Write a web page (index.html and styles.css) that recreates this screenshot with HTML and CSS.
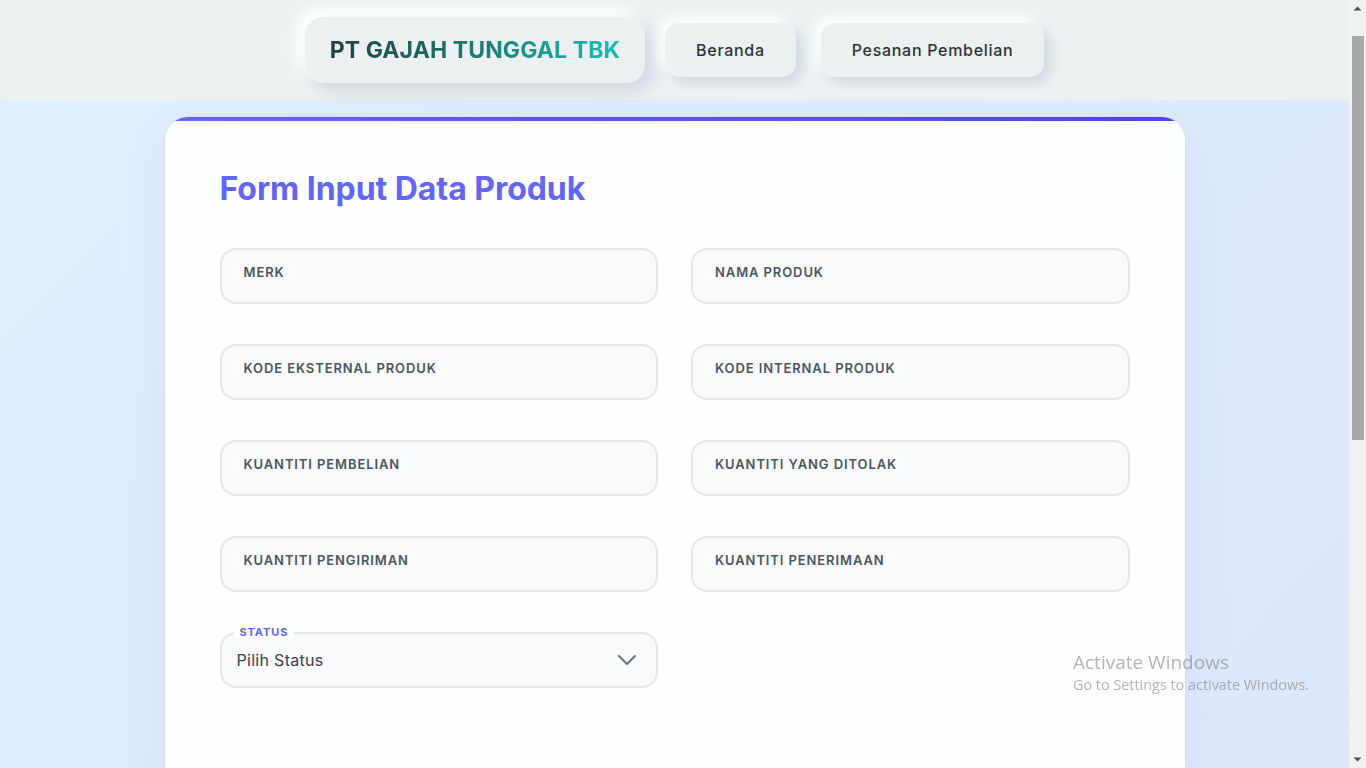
FILE: index.html
```html
<!DOCTYPE html>
<html lang="id">
<head>
<meta charset="utf-8">
<title>Form Input Data Produk</title>
<link rel="stylesheet" href="styles.css">
</head>
<body>
<header class="topbar">
  <div class="brand"><span class="brand-text">PT GAJAH TUNGGAL TBK</span></div>
  <nav class="nav">
    <a class="nav-btn" href="#">Beranda</a>
    <a class="nav-btn" href="#">Pesanan Pembelian</a>
  </nav>
</header>

<main class="card">
  <h1 class="title">Form Input Data Produk</h1>
  <form class="grid">
    <div class="field"><span class="label">MERK</span></div>
    <div class="field"><span class="label">NAMA PRODUK</span></div>
    <div class="field"><span class="label">KODE EKSTERNAL PRODUK</span></div>
    <div class="field"><span class="label">KODE INTERNAL PRODUK</span></div>
    <div class="field"><span class="label">KUANTITI PEMBELIAN</span></div>
    <div class="field"><span class="label">KUANTITI YANG DITOLAK</span></div>
    <div class="field"><span class="label">KUANTITI PENGIRIMAN</span></div>
    <div class="field"><span class="label">KUANTITI PENERIMAAN</span></div>
    <div class="field select">
      <span class="float-label">STATUS</span>
      <span class="select-text">Pilih Status</span>
      <svg class="chev" width="18" height="10" viewBox="0 0 18 10"><path d="M1 1l8 8 8-8" fill="none" stroke="#6b7280" stroke-width="2" stroke-linecap="round" stroke-linejoin="round"/></svg>
    </div>
  </form>
</main>

<div class="watermark">
  <div class="wm-title">Activate Windows</div>
  <div class="wm-sub">Go to Settings to activate Windows.</div>
</div>

<div class="scrollbar" aria-hidden="true">
  <svg class="sb-arrow" width="17" height="17" viewBox="0 0 17 17"><path d="M4.5 10.5h8l-4-4z" fill="#505050"/></svg>
  <div class="sb-track"><div class="sb-thumb"></div></div>
  <svg class="sb-arrow" width="17" height="17" viewBox="0 0 17 17"><path d="M4.5 6.5h8l-4 4z" fill="#505050"/></svg>
</div>
</body>
</html>
```

FILE: styles.css
```css
html { height: 100%; }
body {
  margin: 0 17px 0 0;
  min-height: 1395px;
  font-family: "Inter", "Noto Sans", sans-serif;
  background: linear-gradient(135deg, #dff0fe 0%, #dde7fb 100%);
  background-attachment: fixed;
}

.topbar {
  height: 100px;
  background: #ecf0f1;
  display: flex;
  align-items: center;
  justify-content: center;
  gap: 20px;
}
.brand {
  height: 66px;
  padding: 0 25px;
  display: flex;
  align-items: center;
  border-radius: 18px;
  background: #ecf0f1;
  box-shadow: 8px 8px 16px #d1d9e0, -8px -8px 16px #ffffff;
}
.brand-text {
  font-size: 23px;
  font-weight: 700;
  letter-spacing: 0.1px;
  background: linear-gradient(90deg, #23403f 0%, #1a7a72 50%, #14c2b8 100%);
  -webkit-background-clip: text;
  background-clip: text;
  color: transparent;
}
.nav { display: flex; gap: 25px; }
.nav-btn {
  height: 54px;
  padding: 0 31px;
  display: flex;
  align-items: center;
  border-radius: 14px;
  background: #ecf0f1;
  color: #2d3436;
  font-size: 16px;
  font-weight: 500;
  letter-spacing: 0.7px;
  text-decoration: none;
  box-shadow: 6px 6px 12px #d1d9e0, -6px -6px 12px #ffffff;
}

.card {
  position: relative;
  width: 1022px;
  box-sizing: border-box;
  margin: 16px auto 0;
  min-height: 1250px;
  padding: 50px 55px 60px;
  background: #fdfeff;
  border: 1px solid #d9dee6;
  border-radius: 24px;
  overflow: hidden;
  box-shadow: 0 20px 50px rgba(99, 102, 241, 0.08);
}
.card::before {
  content: "";
  position: absolute;
  left: 0; right: 0; top: 0;
  height: 4px;
  background: linear-gradient(90deg, #6366f1, #4f46e5);
}
.title {
  margin: 0 0 37px;
  font-size: 32px;
  line-height: 44px;
  font-weight: 700;
  color: #6366f1;
  letter-spacing: -0.05px;
}
.grid {
  display: grid;
  grid-template-columns: 1fr 1fr;
  column-gap: 33px;
  row-gap: 40px;
}
.field {
  position: relative;
  height: 56px;
  box-sizing: border-box;
  border: 2px solid #e5e7eb;
  border-radius: 16px;
  background: #f9fafb;
  padding: 11px 0 0 16px;
}
.label {
  display: inline-block;
  padding: 0 6px;
  line-height: 16px;
  font-size: 13px;
  font-weight: 600;
  letter-spacing: 0.9px;
  color: #4b5563;
  background: #fafbfc;
}
.select {
  display: flex;
  align-items: center;
  justify-content: space-between;
  padding: 0 20px 0 15px;
}
.float-label {
  position: absolute;
  top: -8px;
  left: 12px;
  padding: 0 6px;
  background: #fdfeff;
  font-size: 11px;
  line-height: 12px;
  font-weight: 700;
  letter-spacing: 0.9px;
  color: #6366f1;
}
.select-text {
  font-size: 16px;
  letter-spacing: 0.3px;
  color: #374151;
}
.chev { display: block; }

.watermark {
  position: fixed;
  left: 1073px;
  top: 650px;
  font-family: "Open Sans", "Noto Sans", sans-serif;
  color: rgba(120, 120, 120, 0.55);
}
.wm-title { font-size: 19px; line-height: 24px; }
.wm-sub { font-size: 14.4px; line-height: 22px; }

.scrollbar {
  position: fixed;
  top: 0;
  right: 0;
  width: 17px;
  height: 100vh;
  background: #f1f1f1;
  display: flex;
  flex-direction: column;
}
.sb-arrow { display: block; flex: none; }
.sb-track { flex: 1; padding: 19px 2px 0 3px; }
.sb-thumb { height: 404px; background: #a8a8a8; }
```
